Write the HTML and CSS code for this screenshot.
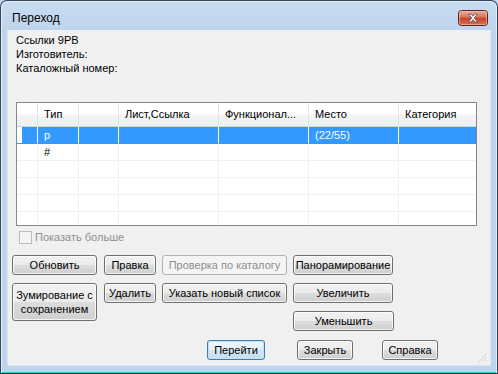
FILE: index.html
```html
<!DOCTYPE html>
<html lang="ru">
<head>
<meta charset="utf-8">
<title>Переход</title>
<link rel="stylesheet" href="styles.css">
</head>
<body>
<div class="window">
  <div class="titlebar">
    <span class="title">Переход</span>
    <span class="close">
      <svg width="30" height="16" viewBox="0 0 30 16">
        <defs>
          <linearGradient id="cg" x1="0" y1="0" x2="0" y2="1">
            <stop offset="0" stop-color="#eab1a3"/>
            <stop offset="0.45" stop-color="#d7755f"/>
            <stop offset="0.5" stop-color="#c4432a"/>
            <stop offset="1" stop-color="#d9714f"/>
          </linearGradient>
        </defs>
        <rect x="0.5" y="0.5" width="29" height="15" rx="3" ry="3" fill="url(#cg)" stroke="#5e2419"/>
        <rect x="1.5" y="1.5" width="27" height="13" rx="2" ry="2" fill="none" stroke="#f2c5b8" stroke-opacity="0.6"/>
        <path d="M10.5 4 L13 4 L15 6.3 L17 4 L19.5 4 L16.3 8 L19.5 12 L17 12 L15 9.7 L13 12 L10.5 12 L13.7 8 Z" fill="#ffffff" stroke="#5a4a48" stroke-width="0.8" stroke-linejoin="round"/>
      </svg>
    </span>
  </div>
  <div class="client">
    <div class="info">
      <div>Ссылки 9PB</div>
      <div>Изготовитель:</div>
      <div>Каталожный номер:</div>
    </div>

    <div class="grid">
      <div class="row head">
        <div class="cell"></div>
        <div class="cell">Тип</div>
        <div class="cell"></div>
        <div class="cell">Лист,Ссылка</div>
        <div class="cell">Функционал...</div>
        <div class="cell">Место</div>
        <div class="cell last">Категория</div>
      </div>
      <div class="row sel">
        <div class="cell first"></div>
        <div class="cell">p</div>
        <div class="cell"></div>
        <div class="cell"></div>
        <div class="cell"></div>
        <div class="cell">(22/55)</div>
        <div class="cell last"></div>
      </div>
      <div class="row">
        <div class="cell"></div>
        <div class="cell">#</div>
        <div class="cell"></div>
        <div class="cell"></div>
        <div class="cell"></div>
        <div class="cell"></div>
        <div class="cell last"></div>
      </div>
      <div class="row">
        <div class="cell"></div><div class="cell"></div><div class="cell"></div><div class="cell"></div><div class="cell"></div><div class="cell"></div><div class="cell last"></div>
      </div>
      <div class="row">
        <div class="cell"></div><div class="cell"></div><div class="cell"></div><div class="cell"></div><div class="cell"></div><div class="cell"></div><div class="cell last"></div>
      </div>
      <div class="row">
        <div class="cell"></div><div class="cell"></div><div class="cell"></div><div class="cell"></div><div class="cell"></div><div class="cell"></div><div class="cell last"></div>
      </div>
      <div class="row">
        <div class="cell"></div><div class="cell"></div><div class="cell"></div><div class="cell"></div><div class="cell"></div><div class="cell"></div><div class="cell last"></div>
      </div>
    </div>

    <div class="check"><span class="box"></span><span class="check-label">Показать больше</span></div>

    <div class="buttons">
      <div class="btn b-upd">Обновить</div>
      <div class="btn b-edit">Правка</div>
      <div class="btn disabled b-cat">Проверка по каталогу</div>
      <div class="btn b-pan">Панорамирование</div>
      <div class="btn tall b-zoom">Зумирование с<br>сохранением</div>
      <div class="btn b-del">Удалить</div>
      <div class="btn b-list">Указать новый список</div>
      <div class="btn b-inc">Увеличить</div>
      <div class="btn b-dec">Уменьшить</div>
    </div>

    <div class="footer">
      <div class="btn default b-go">Перейти</div>
      <div class="btn b-close">Закрыть</div>
      <div class="btn b-help">Справка</div>
    </div>

    <svg class="grip" width="10" height="10" viewBox="0 0 10 10">
      <path d="M9 1 L1 9 M9 4 L4 9 M9 7 L7 9" stroke="#c9c9c9" stroke-width="1"/>
      <path d="M9.5 2 L2 9.5 M9.5 5 L5 9.5 M9.5 8 L8 9.5" stroke="#ffffff" stroke-width="1"/>
    </svg>
  </div>
</div>
</body>
</html>
```

FILE: styles.css
```css
html, body {
  margin: 0;
  padding: 0;
  background: #c0d6ee;
}

body {
  width: 498px;
  height: 374px;
  overflow: hidden;
  font-family: "Liberation Sans", Arial, sans-serif;
  font-size: 11px;
  color: #000;
}

.window {
  width: 498px;
  height: 374px;
  box-sizing: border-box;
  border: 1px solid #34445a;
  border-bottom-color: #1c2632;
  border-radius: 7px 7px 0 0;
  background: linear-gradient(to bottom, #c9ddf1 0px, #bed4ec 30px, #bed4ec 100%);
  box-shadow: inset 1px 1px 0 #e6f0fa, inset -1px 0 0 #e6f0fa, inset 0 -1px 0 #3cc4d8;
  display: flex;
  flex-direction: column;
}

.titlebar {
  height: 29px;
  box-sizing: border-box;
  padding: 9px 9px 0 11px;
  display: flex;
  align-items: flex-start;
}

.title {
  font-size: 12px;
  line-height: 17px;
  color: #000;
}

.close {
  margin-left: auto;
  width: 30px;
  height: 16px;
  display: block;
}

.close svg {
  display: block;
}

.client {
  position: relative;
  flex: 1;
  margin: 0 7px 8px 7px;
  background: #f0f0f0;
  box-shadow: 1px 0 0 #dce8f5, -1px 0 0 #dce8f5, 0 1px 0 #dce8f5;
}

.info {
  padding: 3px 0 0 8px;
  line-height: 14px;
}

/* data grid */
.grid {
  margin: 27px 0 0 8px;
  width: 461px;
  height: 124px;
  box-sizing: border-box;
  border: 1px solid #828790;
  background: #fff;
  overflow: hidden;
}

.row {
  display: grid;
  grid-template-columns: 21px 41px 40px 100px 90px 90px 77px;
  height: 17px;
  line-height: 16px;
}

.cell {
  box-sizing: border-box;
  border-right: 1px solid #f0f0f0;
  border-bottom: 1px solid #f0f0f0;
  padding-left: 6px;
  white-space: nowrap;
  overflow: hidden;
}

.cell.last {
  border-right: none;
}

.row.head {
  height: 24px;
  line-height: 22px;
  background: linear-gradient(to bottom, #ffffff 0%, #ffffff 45%, #f3f4f6 50%, #eff0f2 100%);
}

.row.head .cell {
  border-right: 1px solid #e3e4e6;
  border-bottom: 1px solid #d5d5d5;
}

.row.head .cell.last {
  border-right: none;
}

.row.sel {
  background: #3399ff;
  color: #fff;
}

.row.sel .cell {
  border-right: 1px solid #ffffff;
  border-bottom: 1px solid #3399ff;
}

.row.sel .cell.last {
  border-right: none;
}

.row.sel .cell.first {
  background: linear-gradient(to right, #ffffff 5px, #3399ff 5px);
}

/* checkbox */
.check {
  margin: 4px 0 0 11px;
  height: 14px;
  display: flex;
  align-items: center;
}

.box {
  width: 13px;
  height: 13px;
  box-sizing: border-box;
  border: 1px solid #bcbcbc;
  background: #f4f4f4;
}

.check-label {
  margin-left: 3px;
  color: #8e8f8f;
}

/* buttons */
.btn {
  box-sizing: border-box;
  height: 20px;
  border: 1px solid #707070;
  border-radius: 3px;
  background: linear-gradient(to bottom, #f2f2f2 0%, #ebebeb 50%, #dddddd 51%, #cfcfcf 100%);
  box-shadow: inset 0 0 0 1px rgba(255, 255, 255, 0.75);
  text-align: center;
  line-height: 18px;
  white-space: nowrap;
}

.btn.disabled {
  border-color: #adb2b5;
  background: #f4f4f4;
  box-shadow: none;
  color: #8d8d8d;
}

.btn.tall {
  height: 38px;
  line-height: 14px;
  padding-top: 4px;
}

.btn.default {
  border-color: #3c7fb1;
  background: linear-gradient(to bottom, #eef6fc 0%, #e2eff9 50%, #d2e6f5 51%, #c7def1 100%);
  box-shadow: inset 0 0 0 1px #bfe2f8;
}

.buttons {
  margin: 11px 0 0 4px;
  display: grid;
  grid-template-columns: 86px 52px 125px 101px;
  grid-template-rows: 20px 20px 20px;
  column-gap: 6px;
  row-gap: 8px;
}

.b-upd { grid-column: 1; grid-row: 1; width: 85px; }
.b-edit { grid-column: 2; grid-row: 1; }
.b-cat { grid-column: 3; grid-row: 1; }
.b-pan { grid-column: 4; grid-row: 1; width: 100px; }
.b-zoom { grid-column: 1; grid-row: 2 / span 2; width: 85px; align-self: start; }
.b-del { grid-column: 2; grid-row: 2; }
.b-list { grid-column: 3; grid-row: 2; }
.b-inc { grid-column: 4; grid-row: 2; width: 100px; }
.b-dec { grid-column: 4; grid-row: 3; }

.footer {
  margin: 9px 0 0 199px;
  display: flex;
}

.b-go { width: 58px; }
.b-close { width: 56px; margin-left: 32px; }
.b-help { width: 56px; margin-left: 29px; }

.grip {
  position: absolute;
  right: 2px;
  bottom: 2px;
}
```
